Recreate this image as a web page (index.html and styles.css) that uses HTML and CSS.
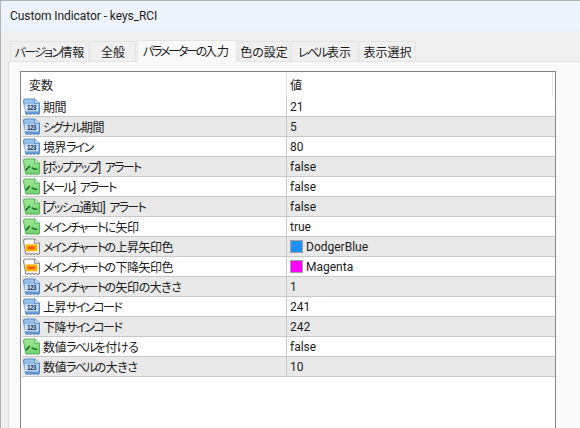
FILE: index.html
```html
<!DOCTYPE html>
<html lang="ja">
<head>
  <meta charset="UTF-8">
  <meta name="viewport" content="width=device-width, initial-scale=1.0">
  <title>Custom Indicator - keys_RCI</title>
  <link rel="stylesheet" href="styles.css">
</head>
<body>
  <!-- Shared parameter type icons -->
  <svg class="icon-defs" width="0" height="0">
    <defs>
      <linearGradient id="blue-page" x1="0" y1="0" x2="0" y2="1">
        <stop offset="0" stop-color="#a3c8ee"/>
        <stop offset="1" stop-color="#5f97d6"/>
      </linearGradient>
      <linearGradient id="green-page" x1="0" y1="0" x2="0" y2="1">
        <stop offset="0" stop-color="#9fe895"/>
        <stop offset="1" stop-color="#6fd272"/>
      </linearGradient>
      <symbol id="icon-int" viewBox="0 0 16 16">
        <path d="M.5 3q0-2 2-2h8.500l4.500 4v9.500l-1.700 1-1.600-1-1.700 1-1.700-1-1.600 1-1.700-1-1.500 1-1.500-1z" fill="url(#blue-page)" stroke="#5a8cc2"/>
        <path d="M11 1v4h4.500" fill="#dcebfa" stroke="#5a8cc2"/>
        <rect x="1.500" y="6" width="13" height="6.500" fill="#e6f1fc" opacity=".75"/>
        <text class="icon-num" x="8" y="11.700" text-anchor="middle">123</text>
      </symbol>
      <symbol id="icon-bool" viewBox="0 0 16 16">
        <path d="M.5 3q0-2 2-2h8.500l4.500 4v9.500l-1.700 1-1.600-1-1.700 1-1.700-1-1.600 1-1.700-1-1.500 1-1.500-1z" fill="url(#green-page)" stroke="#5fb563"/>
        <path d="M11 1v4h4.500" fill="#c8f3c0" stroke="#5fb563"/>
        <path d="M2.500 11.500l4-4M8 9.500h1.500l1 1h3" fill="none" stroke="#0f5a1c" stroke-width="1.300"/>
      </symbol>
      <symbol id="icon-color" viewBox="0 0 16 16">
        <path d="M.5 3q0-2 2-2h8.500l4.500 4v9.500l-1.700 1-1.600-1-1.700 1-1.700-1-1.600 1-1.700-1-1.500 1-1.500-1z" fill="#fafafa" stroke="#858585"/>
        <path d="M11 1v4h4.500" fill="#fff" stroke="#858585"/>
        <rect x="2.500" y="6" width="11" height="6.500" fill="#ffb400"/>
        <rect x="4.500" y="8" width="7" height="2.500" fill="#f25c05"/>
      </symbol>
    </defs>
  </svg>

  <div class="window">
    <header class="titlebar">Custom Indicator - keys_RCI</header>
    <div class="body">
      <nav class="tabs">
        <span class="tab tab-version"><span class="kana">バージョン</span><span>情報</span></span>
        <span class="tab tab-common">全般</span>
        <span class="tab tab-active"><span class="kana">パラメーターの</span><span>入力</span></span>
        <span class="tab tab-colors">色の設定</span>
        <span class="tab tab-levels"><span class="kana">レベル</span><span>表示</span></span>
        <span class="tab tab-show">表示選択</span>
      </nav>
      <section class="panel">
        <div class="grid-box">
          <div class="grid-head">
            <div class="head-name">変数</div>
            <div class="head-value">値</div>
          </div>
          <div class="row"><div class="name"><svg class="icon"><use href="#icon-int"/></svg><span>期間</span></div><div class="value">21</div></div>
          <div class="row"><div class="name"><svg class="icon"><use href="#icon-int"/></svg><span><span class="kana">シグナル</span>期間</span></div><div class="value">5</div></div>
          <div class="row"><div class="name"><svg class="icon"><use href="#icon-int"/></svg><span>境界<span class="kana">ライン</span></span></div><div class="value">80</div></div>
          <div class="row"><div class="name"><svg class="icon"><use href="#icon-bool"/></svg><span class="kana">[ポップアップ] アラート</span></div><div class="value">false</div></div>
          <div class="row"><div class="name"><svg class="icon"><use href="#icon-bool"/></svg><span class="kana">[メール] アラート</span></div><div class="value">false</div></div>
          <div class="row"><div class="name"><svg class="icon"><use href="#icon-bool"/></svg><span><span class="kana">[プッシュ</span>通知<span class="kana">] アラート</span></span></div><div class="value">false</div></div>
          <div class="row"><div class="name"><svg class="icon"><use href="#icon-bool"/></svg><span><span class="kana">メインチャート</span>に矢印</span></div><div class="value">true</div></div>
          <div class="row"><div class="name"><svg class="icon"><use href="#icon-color"/></svg><span><span class="kana">メインチャート</span>の上昇矢印色</span></div><div class="value"><span class="swatch swatch-blue"></span>DodgerBlue</div></div>
          <div class="row"><div class="name"><svg class="icon"><use href="#icon-color"/></svg><span><span class="kana">メインチャート</span>の下降矢印色</span></div><div class="value"><span class="swatch swatch-magenta"></span>Magenta</div></div>
          <div class="row"><div class="name"><svg class="icon"><use href="#icon-int"/></svg><span><span class="kana">メインチャート</span>の矢印の大きさ</span></div><div class="value">1</div></div>
          <div class="row"><div class="name"><svg class="icon"><use href="#icon-int"/></svg><span>上昇<span class="kana">サインコード</span></span></div><div class="value">241</div></div>
          <div class="row"><div class="name"><svg class="icon"><use href="#icon-int"/></svg><span>下降<span class="kana">サインコード</span></span></div><div class="value">242</div></div>
          <div class="row"><div class="name"><svg class="icon"><use href="#icon-bool"/></svg><span>数値<span class="kana">ラベル</span>を付ける</span></div><div class="value">false</div></div>
          <div class="row"><div class="name"><svg class="icon"><use href="#icon-int"/></svg><span>数値<span class="kana">ラベル</span>の大きさ</span></div><div class="value">10</div></div>
        </div>
      </section>
    </div>
  </div>
</body>
</html>
```

FILE: styles.css
```css
:root {
  --frame: #b4b4b4;
  --title-bg: #eef3fb;
  --dialog-bg: #f0f0f0;
  --panel-bg: #f9f9f9;
  --line: #c8c8c8;
  --row-alt: #e9e9e9;
  --text: #1c1c1c;
}

html, body {
  margin: 0;
  height: 100%;
  overflow: hidden;
}

body {
  font-family: Roboto, "Noto Sans CJK JP", sans-serif;
  font-size: 12px;
  font-feature-settings: "palt";
  color: var(--text);
}

/* Katakana runs are set narrower than kanji */
.kana {
  letter-spacing: -1.7px;
  word-spacing: 4px;
}

.icon-defs {
  display: block;
  height: 0;
}

.icon-num {
  font-family: "Liberation Sans", sans-serif;
  font-size: 6px;
  font-weight: 700;
  fill: #0d2f5a;
}

.window {
  height: 428px;
  display: flex;
  flex-direction: column;
  box-sizing: border-box;
  border-top: 1px solid var(--frame);
  border-left: 1px solid var(--frame);
  overflow: hidden;
}

.titlebar {
  height: 30px;
  flex: none;
  display: flex;
  align-items: center;
  padding-left: 9px;
  letter-spacing: -.07px;
  background: var(--title-bg);
}

.body {
  flex: 1;
  min-height: 0;
  display: flex;
  flex-direction: column;
  background: var(--dialog-bg);
  padding: 9px 0 0 7px;
}

/* Tabs */
.tabs {
  display: flex;
  align-items: flex-end;
  height: 21px;
  padding-left: 2px;
  flex: none;
}

.tab {
  height: 20px;
  display: flex;
  align-items: center;
  justify-content: center;
  box-sizing: border-box;
  background: #f0f0f0;
  border: 1px solid #e4e4e4;
  border-bottom: 0;
  margin-right: 1px;
  white-space: nowrap;
}

.tab-version { width: 79px; }
.tab-common { width: 46px; }
.tab-colors { width: 52px; }
.tab-levels { width: 67px; }
.tab-show { width: 57px; }

.tab-active {
  width: 100px;
  height: 22px;
  background: var(--panel-bg);
  margin-bottom: -1px;
  position: relative;
  padding: 0 2px 3px 0;
}

.tab-active .kana { letter-spacing: -2.2px; }

/* Panel with the parameter grid */
.panel {
  flex: 1;
  min-height: 0;
  overflow: hidden;
  background: var(--panel-bg);
  border-top: 1px solid #e4e4e4;
  border-left: 1px solid #dcdcdc;
  padding: 9px 0 0 11px;
}

.grid-box {
  width: 536px;
  height: 400px;
  box-sizing: border-box;
  background: #fff;
  border: 1px solid #85858c;
  padding: 0 0 0 1px;
}

.grid-head {
  display: grid;
  grid-template-columns: 265px 266px;
  height: 25px;
}

.head-name, .head-value {
  display: flex;
  align-items: center;
  padding-left: 7px;
}

.head-name { border-right: 1px solid #e4e4e4; }
.head-value { padding-left: 3px; border-right: 1px solid #e4e4e4; }

.row {
  display: grid;
  grid-template-columns: 265px 266px;
  height: 20px;
  box-sizing: border-box;
  border-bottom: 1px solid var(--line);
}

.row:nth-of-type(odd) { background: var(--row-alt); }

.name, .value {
  display: flex;
  align-items: center;
  white-space: nowrap;
}

.name {
  letter-spacing: -.5px;
  border-right: 1px solid var(--line);
}

.value { padding-left: 3px; }

.icon {
  width: 17px;
  height: 17px;
  margin: 0 3px 0 1px;
  flex: none;
}

.swatch {
  width: 13px;
  height: 13px;
  box-sizing: border-box;
  border: 1px solid #a0a0a0;
  margin-right: 3px;
  flex: none;
}

.swatch-blue { background: #1e90ff; }
.swatch-magenta { background: #ff00ff; }
```
